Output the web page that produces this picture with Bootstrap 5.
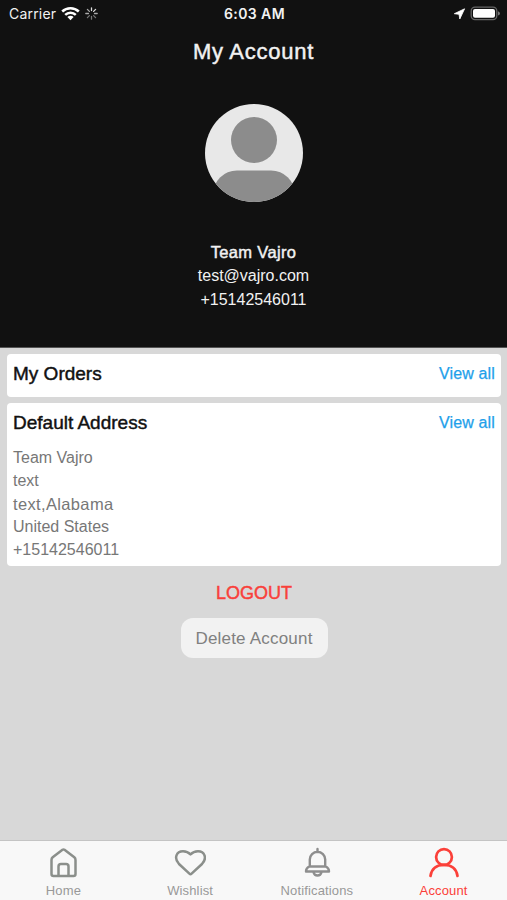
<!DOCTYPE html>
<html lang="en">
<head>
<meta charset="utf-8">
<meta name="viewport" content="width=device-width, initial-scale=1">
<title>My Account</title>
<link rel="stylesheet" href="https://cdn.jsdelivr.net/npm/bootstrap@5.3.0/dist/css/bootstrap.min.css">
<style>
body{font-family:"Liberation Sans",Arial,sans-serif;background:#d8d8d8;color:#111;overflow:hidden}
.profile-header{background:#111;height:348px;color:#f2f2f2;border-bottom:1px solid #555}
.status-bar{height:27px;font:14px/27px Inter,sans-serif;padding:0 7px 0 9px}
.status-bar svg{display:block}
.side{flex:1 1 0}
.carrier{letter-spacing:.2px}
.clock{font-weight:600;letter-spacing:.4px}
.medium{-webkit-text-stroke:.45px currentColor}
.page-title{font-size:22px;line-height:26px;margin:12px 0 38.500px;letter-spacing:.75px}
.avatar{display:block;margin:0 auto 38px}
.contact{font-size:16px;line-height:24.3px}
.contact-name{font-size:16.500px;letter-spacing:.35px}
.panel{background:#fff;border-radius:4px;padding:1px 6px 0}
.panel-title{font-size:19px;line-height:38px;margin:0}
.view-all{color:#1ea0ea;font-size:16px;line-height:38px;letter-spacing:.15px;-webkit-text-stroke:.25px currentColor}
.address{font-size:16px;line-height:22.9px;color:#777;padding-top:5px}
.address .street{font-size:16.500px;letter-spacing:.35px}
.logout{color:#f9403a;font-size:18px;line-height:24px;background:none;border:0;margin-top:14px}
.delete{background:#f2f2f2;color:#808080;width:147px;height:40px;border-radius:12px;font-size:17px;letter-spacing:.2px;border:0;margin-top:12px;padding-top:2px}
.tabs{height:60px;background:#f8f8f8;border-top:1px solid #c4c4c4;font-size:13px;line-height:14px}
.tabs a{color:#999;text-decoration:none;padding-top:6px;letter-spacing:.15px}
.tabs a.current{color:#fb4039}
.tabs svg{display:block;margin-bottom:5px}
main{padding:6px 6px 0 7px}
.orders{height:43px;margin-bottom:6px}
.default-address{height:163px}
</style>
<script src="https://cdn.jsdelivr.net/npm/bootstrap@5.3.0/dist/js/bootstrap.bundle.min.js"></script>
</head>
<body class="d-flex flex-column vh-100">
<header class="profile-header text-center flex-shrink-0">
  <div class="status-bar d-flex align-items-center">
    <div class="side d-flex align-items-center"><span class="carrier">Carrier</span>
      <svg class="ms-1" width="21" height="15" viewBox="0 0 20 15" fill="none" stroke="#fff" stroke-width="2.5"><path d="M1.7 5.5a12 12 0 0 1 16.6 0M4.7 8.8a7.6 7.6 0 0 1 10.6 0"/><path d="M6.9 11a4.4 4.4 0 0 1 6.2 0L10 14.2z" fill="#fff" stroke="none"/></svg>
      <svg class="ms-1" width="13" height="13" viewBox="-6.5 -6.5 13 13" stroke-width="1.3" stroke-linecap="round"><path stroke="#ddd" d="M0-3v-2.7M2.1-2.1l2-2"/><path stroke="#aaa" d="M3 0h2.7M-2.1-2.1l-2-2M-3 0h-2.7"/><path stroke="#777" d="M2.1 2.1l2 2M0 3v2.7M-2.1 2.1l-2 2"/></svg>
    </div>
    <span class="clock">6:03 AM</span>
    <div class="side d-flex align-items-center justify-content-end">
      <svg class="me-1" width="14" height="14" viewBox="0 0 14 14"><path fill="#fff" stroke="#fff" stroke-width=".8" stroke-linejoin="round" d="M12.600 1.800 7.800 12l-.8-4.700-4.700-.6z"/></svg>
      <svg width="30" height="15" viewBox="0 0 30 15"><rect x="1.2" y="1.200" width="25.600" height="12.400" rx="3.800" fill="none" stroke="#666" stroke-width="1.300"/><rect x="3" y="3" width="22" height="8.800" rx="2" fill="#fff"/><path d="M28 5.200q2 .8 2 2.200t-2 2.200z" fill="#777"/></svg>
    </div>
  </div>
  <h1 class="page-title medium fw-normal">My Account</h1>
  <svg class="avatar" width="98" height="98" viewBox="0 0 98 98"><defs><clipPath id="disc"><circle cx="49" cy="49" r="49"/></clipPath></defs><g clip-path="url(#disc)"><path fill="#e8e8e8" d="M0 0h98v98H0z"/><circle cx="49" cy="36" r="23" fill="#8c8c8c"/><rect x="8" y="66.500" width="82" height="50" rx="24" fill="#8c8c8c"/></g></svg>
  <div class="contact"><div class="contact-name medium">Team Vajro</div><div>test@vajro.com</div><div>+15142546011</div></div>
</header>
<main class="flex-grow-1 d-flex flex-column">
  <section class="panel orders d-flex justify-content-between"><h2 class="panel-title medium fw-normal">My Orders</h2><a class="view-all text-decoration-none" href="#">View all</a></section>
  <section class="panel default-address">
    <div class="d-flex justify-content-between"><h2 class="panel-title medium fw-normal">Default Address</h2><a class="view-all text-decoration-none" href="#">View all</a></div>
    <div class="address"><div>Team Vajro</div><div>text</div><div class="street">text,Alabama</div><div>United States</div><div>+15142546011</div></div>
  </section>
  <button class="logout medium align-self-center">LOGOUT</button>
  <button class="delete align-self-center">Delete Account</button>
</main>
<nav class="tabs row g-0 flex-shrink-0 text-center">
  <a class="col d-flex flex-column align-items-center" href="#"><svg width="32" height="32" viewBox="0 0 32 32" fill="none" stroke="#8b8f8b" stroke-width="2.500" stroke-linejoin="round"><path d="M17.500 2.800 27.300 10.300Q28.500 11.300 28.500 13V27q0 2-2 2h-20q-2 0-2-2V13q0-1.700 1.200-2.700L15.500 2.800q1-.7 2 0z"/><path d="M11.500 29V19.500q0-2.500 2.500-2.500h5q2.500 0 2.500 2.500V29"/></svg>Home</a>
  <a class="col d-flex flex-column align-items-center" href="#"><svg width="32" height="32" viewBox="0 0 32 32" fill="none" stroke="#8b8f8b" stroke-width="2.500" stroke-linejoin="round"><path d="M15.400 26.700 5 17C-.5 11 2.500 4.200 9 4.200Q13.500 4.200 16.500 7.400 19.500 4.200 24 4.200C30.500 4.200 33.500 11 28 17L17.600 26.700q-1.100 1-2.200 0z"/></svg>Wishlist</a>
  <a class="col d-flex flex-column align-items-center" href="#"><svg width="32" height="32" viewBox="0 0 32 32" fill="none" stroke="#8e8e8e" stroke-width="2.400" stroke-linejoin="round" stroke-linecap="round"><path d="M16.500 2v3M8.800 19.500v-7a7.700 7.700 0 0 1 15.400 0v7M8.300 19.500h16.400q3.300 1.500 3.300 5H5q0-3.500 3.300-5zM12.500 25.200q.8 3.300 4 3.300t4-3.300"/></svg>Notifications</a>
  <a class="col current d-flex flex-column align-items-center" href="#" aria-current="page"><svg width="32" height="32" viewBox="0 0 32 32" fill="none" stroke="currentColor" stroke-width="2.700" stroke-linecap="round"><circle cx="16" cy="10" r="7.900"/><path d="M2.500 29C3.500 21.500 9 17.900 16 17.900S28.500 21.500 29.500 29"/></svg>Account</a>
</nav>
</body>
</html>
